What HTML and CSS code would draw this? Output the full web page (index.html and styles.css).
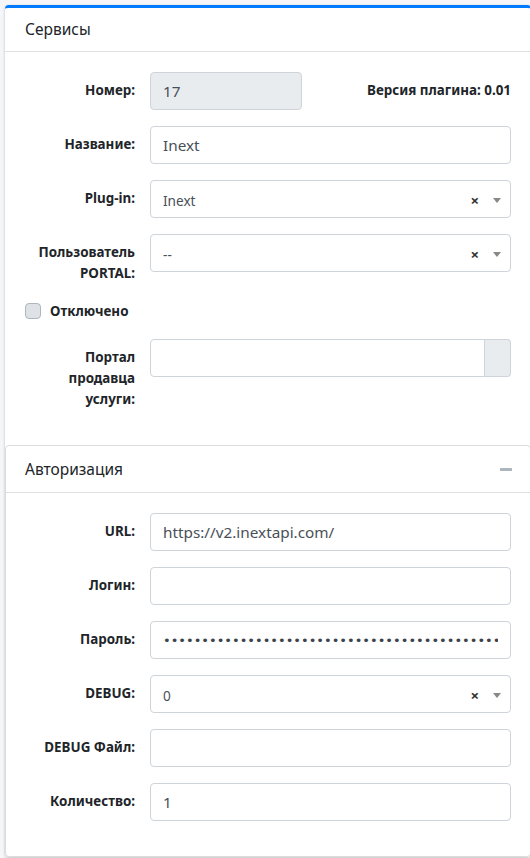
FILE: index.html
```html
<!DOCTYPE html>
<html lang="ru">
<head>
<meta charset="utf-8">
<title>Сервисы</title>
<link rel="stylesheet" href="styles.css">
</head>
<body>
<div class="card card-outline">
  <div class="card-header">
    <h3 class="card-title">Сервисы</h3>
  </div>
  <div class="card-body">
    <div class="form-row row-number">
      <label class="col-label">Номер:</label>
      <input class="form-control" type="text" value="17" disabled>
      <div class="version">Версия плагина: 0.01</div>
    </div>
    <div class="form-row">
      <label class="col-label">Название:</label>
      <input class="form-control" type="text" value="Inext">
    </div>
    <div class="form-row">
      <label class="col-label">Plug-in:</label>
      <div class="select2">
        <span class="sel-text">Inext</span>
        <span class="sel-clear">×</span>
        <span class="sel-arrow"></span>
      </div>
    </div>
    <div class="form-row">
      <label class="col-label">Пользователь PORTAL:</label>
      <div class="select2">
        <span class="sel-text">--</span>
        <span class="sel-clear">×</span>
        <span class="sel-arrow"></span>
      </div>
    </div>
    <div class="check-row">
      <input class="check" type="checkbox" id="off">
      <label class="check-label" for="off">Отключено</label>
    </div>
    <div class="form-row">
      <label class="col-label">Портал продавца услуги:</label>
      <div class="input-group">
        <input class="form-control group-input" type="text" value="">
        <span class="group-addon"></span>
      </div>
    </div>
  </div>

  <div class="card inner">
    <div class="card-header inner-header">
      <h3 class="card-title">Авторизация</h3>
      <span class="tool">
        <svg width="12" height="3" viewBox="0 0 12 3"><rect x="0" y="0" width="12" height="3" rx="0.5" fill="#adb5bd"/></svg>
      </span>
    </div>
    <div class="card-body inner-body">
      <div class="form-row">
        <label class="col-label">URL:</label>
        <input class="form-control" type="text" value="https://v2.inextapi.com/">
      </div>
      <div class="form-row">
        <label class="col-label">Логин:</label>
        <input class="form-control" type="text" value="">
      </div>
      <div class="form-row">
        <label class="col-label">Пароль:</label>
        <input class="form-control pass" type="password" value="abcdefghijabcdefghijabcdefghijabcdefghijabcdefghijabcdefghijabcdefghij">
      </div>
      <div class="form-row">
        <label class="col-label">DEBUG:</label>
        <div class="select2">
          <span class="sel-text">0</span>
          <span class="sel-clear">×</span>
          <span class="sel-arrow"></span>
        </div>
      </div>
      <div class="form-row">
        <label class="col-label">DEBUG Файл:</label>
        <input class="form-control" type="text" value="">
      </div>
      <div class="form-row">
        <label class="col-label">Количество:</label>
        <input class="form-control" type="text" value="1">
      </div>
    </div>
  </div>
</div>
</body>
</html>
```
FILE: styles.css
```css
html, body {
  overflow: hidden;
}
body {
  margin: 0;
  background: #f4f6f9;
  font-family: "Noto Sans", "Open Sans", sans-serif;
  color: #212529;
}
.card {
  margin: 5px 0 24px 5px;
  width: 526px;
  background: #fff;
  border-radius: 4px;
  box-shadow: 0 0 1px rgba(0,0,0,.125), 0 1px 3px rgba(0,0,0,.2);
}
.card-outline {
  border-top: 3px solid #007bff;
}
.card-header {
  height: 44px;
  box-sizing: border-box;
  padding: 0 20px;
  display: flex;
  align-items: center;
  border-bottom: 1px solid #dfdfdf;
}
.card-title {
  margin: 0;
  font-size: 15.5px;
  font-weight: 400;
  line-height: 1.2;
}
.card-body {
  padding: 20px 20px 19px;
}
.form-row {
  display: grid;
  grid-template-columns: 110px 1fr;
  column-gap: 15px;
  align-items: start;
  margin-bottom: 16px;
}
.row-number {
  grid-template-columns: 110px 152px 1fr;
}
.col-label {
  display: block;
  font-size: 13.4px;
  font-weight: 700;
  line-height: 21px;
  padding-top: 8px;
  text-align: right;
}
.version {
  font-size: 13.4px;
  font-weight: 700;
  line-height: 21px;
  padding-top: 8px;
  text-align: right;
}
.form-control {
  display: block;
  width: 100%;
  height: 38px;
  box-sizing: border-box;
  margin: 0;
  padding: 6px 12px;
  border: 1px solid #ced4da;
  border-radius: 4px;
  background: #fff;
  color: #495057;
  font-family: inherit;
  font-size: 15.3px;
  outline: none;
}
.form-control:disabled {
  background: #e9ecef;
  color: #495057;
  opacity: 1;
}
.pass {
  font-family: "DejaVu Sans", sans-serif;
  font-size: 13px;
  letter-spacing: 0;
  color: #3d444b;
}
.select2 {
  display: flex;
  align-items: center;
  height: 38px;
  box-sizing: border-box;
  padding: 2px 9px 0 12px;
  border: 1px solid #ced4da;
  border-radius: 4px;
  background: #fff;
  font-size: 13.6px;
  color: #444;
}
.sel-text {
  flex: 1;
  color: #495057;
}
.sel-clear {
  font-weight: 700;
  font-size: 15px;
  color: #333;
  margin-right: 14px;
}
.sel-arrow {
  width: 0;
  height: 0;
  border-style: solid;
  border-width: 5px 4px 0 4px;
  border-color: #888 transparent transparent transparent;
}
.check-row {
  display: flex;
  align-items: center;
  gap: 9px;
  height: 22px;
  margin-bottom: 17px;
}
.check {
  appearance: none;
  -webkit-appearance: none;
  width: 16px;
  height: 16px;
  margin: 0;
  box-sizing: border-box;
  border: 1px solid #adb5bd;
  border-radius: 4px;
  background: #dee2e6;
}
.check-label {
  font-size: 13.4px;
  font-weight: 700;
  line-height: 21px;
}
.input-group {
  display: flex;
}
.group-input {
  flex: 1;
  border-radius: 4px 0 0 4px;
}
.group-addon {
  width: 26px;
  height: 38px;
  box-sizing: border-box;
  border: 1px solid #ced4da;
  border-left: 0;
  border-radius: 0 4px 4px 0;
  background: #e9ecef;
}
.inner {
  margin: 0;
  width: 100%;
  box-sizing: border-box;
  border: 1px solid #dcdcdc;
  box-shadow: none;
}
.inner-header {
  height: 47px;
  padding: 0 18px 0 19px;
}
.tool {
  margin-left: auto;
  display: flex;
}
.inner-body {
  padding: 20px 19px 19px;
}
```
